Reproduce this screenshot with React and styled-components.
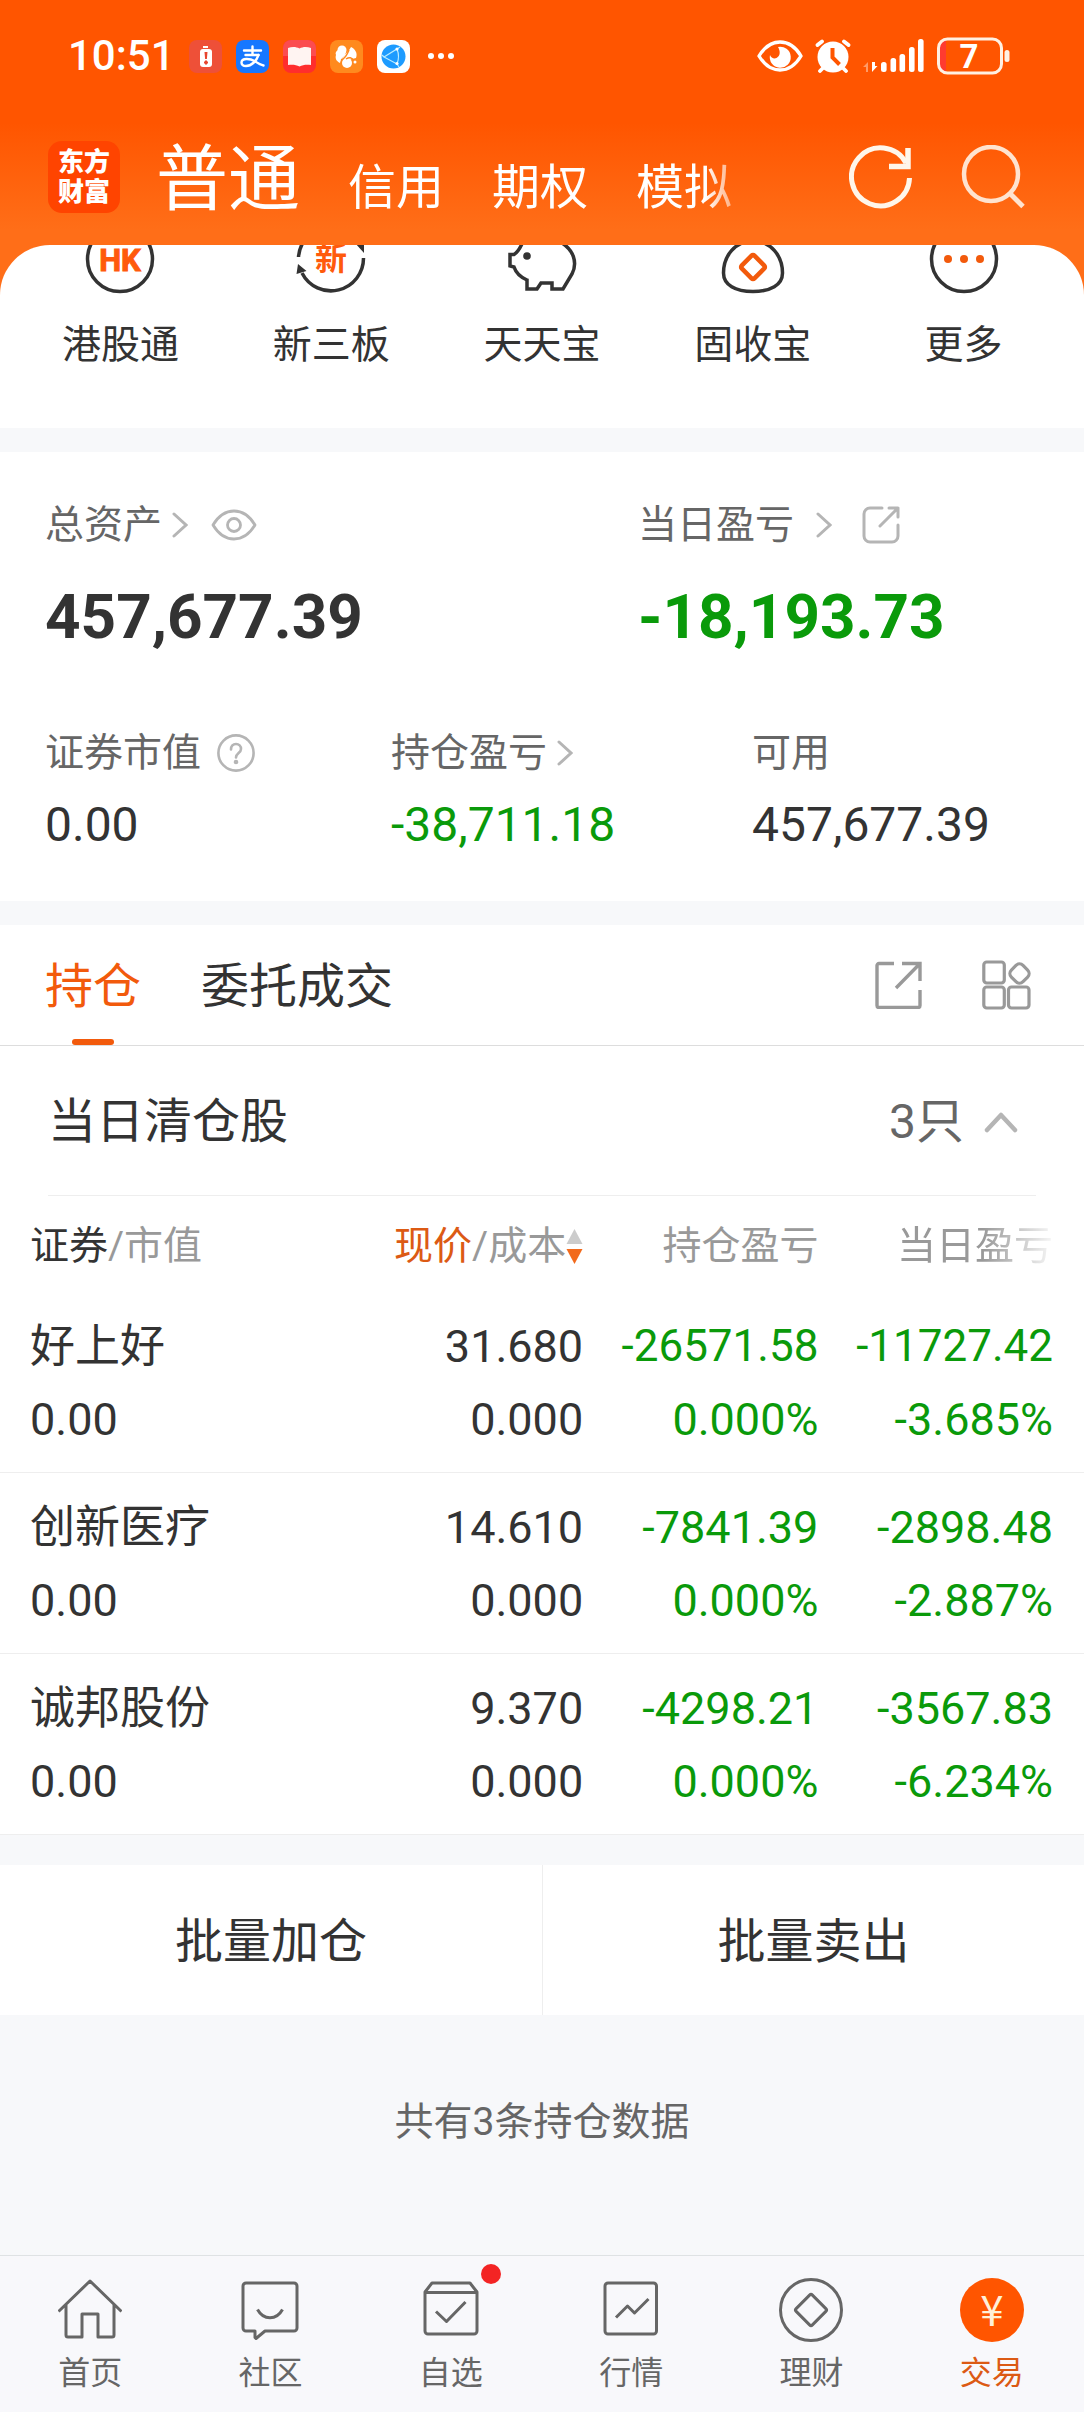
import React from 'react';

import styled, { createGlobalStyle } from 'styled-components';

const GlobalStyle = createGlobalStyle`
  :root {
    --orange: #f25a0c;
    --green: #0a9a0a;
    --ink: #333;
    --label: #666;
    --muted: #999;
    --icon: #b5b5b5;
    --band: #f7f8fa;
    --fs-sm: 32px;
    --fs-md: 39px;
    --fs-lg: 45px;
    --fs-xl: 48px;
  }

  * {
    box-sizing: border-box;
  }

  body {
    margin: 0;
    background: var(--band);
    color: var(--ink);
    font-family: Roboto, 'Noto Sans CJK SC', sans-serif;
    font-size: var(--fs-md);
    line-height: 56px;
  }

  svg {
    display: block;
    flex: none;
  }
`;

const Page = styled.div`
  display: flex;
  flex-direction: column;
  min-height: 100vh;
`;

const PlainButton = styled.button`
  display: flex;
  align-items: center;
  justify-content: center;
  margin: 0;
  padding: 0;
  border: 0;
  background: none;
  color: inherit;
  font: inherit;
  cursor: pointer;
`;

/* header */

const Header = styled.header`
  background: linear-gradient(#ff5500 50%, #ff6e18 94%);
  color: #fff;
`;

const StatusBar = styled.div`
  display: flex;
  align-items: center;
  justify-content: space-between;
  height: 112px;
  padding: 0 74px 0 68px;
`;

const StatusGroup = styled.div`
  display: flex;
  align-items: center;
  gap: ${({ $gap }) => $gap}px;
`;

const Clock = styled.span`
  font-size: 42px;
  font-weight: 500;
`;

const TopBar = styled.div`
  display: flex;
  align-items: center;
  height: 133px;
  padding: 0 59px 4px 48px;
`;

const Logo = styled.a`
  flex: none;
  width: 72px;
  height: 72px;
  padding: 6px 10px;
  border-radius: 14px;
  background: #ff4400;
  color: #fff;
  font-size: 26px;
  font-weight: 900;
  line-height: 30px;
  text-decoration: none;
`;

const AccountTabs = styled.nav`
  display: flex;
  flex: 1;
  align-items: baseline;
  gap: 48px;
  margin: 0 92px 0 36px;
  padding-top: 14px;
  mask-image: linear-gradient(to right, #000 calc(100% - 52px), transparent);
`;

const AccountTab = styled(PlainButton)`
  flex: none;
  font-size: ${({ $active }) => ($active ? '72px' : 'var(--fs-xl)')};
  line-height: 84px;
`;

const TopActions = styled.div`
  display: flex;
  gap: 48px;
`;

/* services */

const SheetBack = styled.div`
  background: #ff6e18;
`;

const Services = styled.section`
  display: grid;
  grid-template-columns: repeat(5, 1fr);
  padding: 0 15px 55px;
  border-radius: 50px 50px 0 0;
  background: #fff;
`;

const Service = styled.a`
  display: flex;
  flex-direction: column;
  align-items: center;
  gap: 22px;
  color: inherit;
  text-decoration: none;
`;

/* assets */

const Assets = styled.section`
  display: flex;
  flex-direction: column;
  gap: 70px;
  margin: 24px 0;
  padding: 45px 45px 48px;
  background: #fff;
`;

const AssetRow = styled.div`
  display: grid;
  grid-template-columns: ${({ $columns }) => $columns};
`;

const Asset = styled.div`
  display: flex;
  flex-direction: column;
  gap: ${({ $large }) => ($large ? 26 : 16)}px;
`;

const AssetLabel = styled.div`
  display: flex;
  align-items: center;
  gap: ${({ $gap }) => $gap || 0}px;
  color: var(--label);
`;

const IconButton = styled(PlainButton)`
  margin-left: ${({ $space }) => $space || 0}px;
`;

const Amount = styled.span`
  color: ${({ $down }) => ($down ? 'var(--green)' : 'var(--ink)')};
  font-size: ${({ $large }) => ($large ? '62px' : 'var(--fs-xl)')};
  font-weight: ${({ $large }) => ($large ? 700 : 400)};
  line-height: ${({ $large }) => ($large ? 76 : 56)}px;
`;

/* holdings */

const Holdings = styled.section`
  background: #fff;
`;

const TabBar = styled.div`
  display: flex;
  justify-content: space-between;
  height: 121px;
  padding: 0 52px 0 45px;
  border-bottom: 1px solid #ddd;
`;

const TabGroup = styled.div`
  display: flex;
  gap: 60px;
`;

const Tab = styled(PlainButton)`
  position: relative;
  padding-top: 3px;
  color: ${({ $active }) => ($active ? 'var(--orange)' : 'var(--ink)')};
  font-size: var(--fs-xl);

  &::after {
    content: '';
    display: ${({ $active }) => ($active ? 'block' : 'none')};
    position: absolute;
    bottom: 0;
    left: calc(50% - 21px);
    width: 42px;
    height: 6px;
    border-radius: 3px;
    background: var(--orange);
  }
`;

const ClearedRow = styled.div`
  display: flex;
  align-items: center;
  justify-content: space-between;
  height: 150px;
  margin: 0 48px;
  padding: 3px 18px 0 0;
  border-bottom: 1px solid #eee;
  font-size: var(--fs-xl);
`;

const Count = styled(PlainButton)`
  gap: 20px;
  color: var(--label);
`;

const Table = styled.table`
  width: 100%;
  border-spacing: 0;
  table-layout: fixed;
`;

const Column = styled.col`
  width: ${({ $width }) => $width};
`;

const HeadCell = styled.th`
  height: 96px;
  padding: 3px 0 0;
  color: var(--muted);
  font-weight: 400;
  text-align: right;
  white-space: nowrap;

  &:first-child {
    padding-left: 30px;
    text-align: left;
  }

  &:last-child {
    padding-right: 31px;
  }
`;

const HeadSort = styled(PlainButton)`
  display: inline-flex;
  vertical-align: top;
`;

const HeadName = styled.span`
  color: ${({ $active }) => ($active ? '#dc5a14' : 'var(--ink)')};
`;

const Faded = styled.span`
  mask-image: linear-gradient(to right, #000 55%, rgba(0, 0, 0, 0.08));
`;

const Cell = styled.td`
  padding: 18px 0 16px;
  border-bottom: 1px solid #eee;
  color: ${({ $down }) => ($down ? 'var(--green)' : 'var(--ink)')};
  text-align: right;
  white-space: nowrap;

  &:first-child {
    padding-left: 30px;
    text-align: left;
  }

  &:last-child {
    padding-right: 31px;
  }
`;

const Line = styled.div`
  font-size: ${({ $long }) => ($long ? '44px' : 'var(--fs-lg)')};
  line-height: 73px;
`;

const BatchActions = styled.div`
  display: grid;
  grid-template-columns: 1fr 1fr;
  margin-top: 30px;
  background: #fff;
`;

const BatchButton = styled(PlainButton)`
  height: 150px;
  padding-top: 3px;
  font-size: var(--fs-xl);

  & + & {
    border-left: 1px solid #eee;
  }
`;

const Summary = styled.p`
  flex: 1;
  margin: 0;
  padding: 79px 0 104px;
  color: var(--label);
  text-align: center;
`;

/* bottom navigation */

const BottomNav = styled.nav`
  display: grid;
  grid-template-columns: repeat(6, 1fr);
  height: 157px;
  padding: 22px 2px 0 0;
  border-top: 1px solid #dfe2e4;
  background: #f8f8fb;
`;

const NavItem = styled.a`
  position: relative;
  display: flex;
  flex-direction: column;
  align-items: center;
  gap: 11px;
  color: ${({ $active }) => ($active ? '#dc5a14' : 'var(--label)')};
  font-size: var(--fs-sm);
  line-height: 40px;
  text-decoration: none;
`;

const Badge = styled.span`
  position: absolute;
  top: -14px;
  left: calc(50% + 30px);
  width: 20px;
  height: 20px;
  border-radius: 50%;
  background: #f32424;
`;

const YuanCoin = styled.span`
  width: 64px;
  height: 64px;
  border-radius: 50%;
  background: #ff5500;
  color: #fff0d8;
  font-family: 'Noto Sans CJK SC', sans-serif;
  font-size: 42px;
  line-height: 60px;
  text-align: center;
`;

/* icons */

const Chevron = () => (
  <svg width="16" height="26" viewBox="0 0 16 26" fill="none" stroke="#b5b5b5" strokeWidth="3" strokeLinecap="round">
    <path d="M2 2l12 11L2 24" />
  </svg>
);

const ChevronUp = () => (
  <svg width="34" height="22" viewBox="0 0 34 22" fill="none" stroke="#b5b5b5" strokeWidth="4.500" strokeLinecap="round" strokeLinejoin="round">
    <path d="M3 19L17 4l14 15" />
  </svg>
);

const EyeIcon = () => (
  <svg width="46" height="32" viewBox="0 0 46 32" fill="none" stroke="#b5b5b5" strokeWidth="2.800">
    <path d="M2 16C8 6 15 2 23 2s15 4 21 14c-6 10-13 14-21 14S8 26 2 16z" strokeLinejoin="round" />
    <circle cx="23" cy="16" r="6.5" />
  </svg>
);

const HelpIcon = () => (
  <svg width="38" height="38" viewBox="0 0 38 38" fill="none" stroke="#b5b5b5" strokeWidth="2.600" strokeLinecap="round">
    <circle cx="19" cy="19" r="17.6" />
    <path d="M14 15.5c0-3.500 2-5.500 5-5.500s5 2 5 5c0 4-5 4-5 8.500" />
    <circle cx="19" cy="28" r="1" fill="#b5b5b5" />
  </svg>
);

const ShareIcon = () => (
  <svg width="38" height="38" viewBox="0 0 38 38" fill="none" stroke="#b5b5b5" strokeWidth="3" strokeLinecap="round" strokeLinejoin="round">
    <path d="M20 2H8a6 6 0 0 0-6 6v22a6 6 0 0 0 6 6h22a6 6 0 0 0 6-6V19" />
    <path d="M27 2h9v9M36 2L18 20" />
  </svg>
);

const ShareSquareIcon = () => (
  <svg width="48" height="48" viewBox="0 0 48 48" fill="none" stroke="#999" strokeWidth="3.400">
    <path d="M20 2.500H5a2 2 0 0 0-2 2v40a2 2 0 0 0 2 2h39a2 2 0 0 0 2-2V29" />
    <path d="M28 2.500h18V20M45.500 3L22 27" />
  </svg>
);

const GridIcon = () => (
  <svg width="50" height="50" viewBox="0 0 50 50" fill="none" stroke="#999" strokeWidth="3.200">
    <rect x="1.800" y="2" width="20.500" height="21" rx="3" />
    <rect x="1.800" y="27" width="20.500" height="21" rx="3" />
    <rect x="26.500" y="27" width="20.500" height="21" rx="3" />
    <rect x="29.300" y="5.300" width="16.500" height="16.500" rx="5" transform="rotate(45 37.500 13.500)" />
  </svg>
);

const SortIcon = () => (
  <svg width="17" height="38" viewBox="0 0 17 38">
    <path d="M8.500 2l8 15H.5z" fill="#ccc" />
    <path d="M8.500 37l8-15H.5z" fill="#f26a1c" />
  </svg>
);

const RefreshIcon = () => (
  <svg width="64" height="64" viewBox="0 0 64 64" fill="none" stroke="#fff6ea" strokeWidth="5">
    <path d="M60.500 33A29 29 0 1 1 57 18" />
    <path d="M59 3v18.500H40" strokeWidth="5.500" />
  </svg>
);

const SearchIcon = () => (
  <svg width="64" height="64" viewBox="0 0 64 64" fill="none" stroke="#ffe3cf" strokeWidth="4.500">
    <circle cx="30" cy="29" r="27" />
    <path d="M48.500 48L62 61.500" strokeWidth="5" />
  </svg>
);

const NoticeIcons = () => (
  <>
    <svg width="33" height="33" viewBox="0 0 33 33">
      <rect width="33" height="33" rx="8" fill="#ee5038" />
      <path d="M14 6h5v2h-5z" fill="#fff" />
      <rect x="11" y="9" width="12" height="18" rx="3" fill="#fff" />
      <path d="M15.500 12h3l-.6 7h-1.800zM16 20.500h2v1h1v2h-1v1h-2v-1h-1v-2h1z" fill="#e8452e" />
    </svg>
    <svg width="33" height="33" viewBox="0 0 33 33">
      <rect width="33" height="33" rx="8" fill="#1677ff" />
      <g fill="none" stroke="#fff" strokeWidth="2.400" strokeLinecap="round">
        <path d="M8 10.500h17M16.500 6.500V15M9.500 15h13" />
        <path d="M22.500 15c-2 6-7 11-12.500 11-3 0-4.500-1.500-4.500-3.500 0-5 9-4 13-1.500 3 2 6 4 9 4.500" />
      </g>
    </svg>
    <svg width="33" height="33" viewBox="0 0 33 33">
      <rect width="33" height="33" rx="8" fill="#ff2d2d" />
      <path d="M0 8a8 8 0 0 1 8-8h17a8 8 0 0 1 8 8v8H0z" fill="#fb4c50" />
      <path d="M5 8c4-1.500 8-1.500 11.500.5C20 6.500 24 6.500 28 8v17c-4-.5-8-.5-11.500 1.500C13 24.500 9 24.500 5 25z" fill="#fff4f2" />
    </svg>
    <svg width="33" height="33" viewBox="0 0 33 33">
      <rect width="33" height="33" rx="8" fill="#ff8a1e" />
      <circle cx="12" cy="10" r="4.500" fill="#fff" />
      <path d="M16 11c0 5-5 6-6 12-4-2-5-5-4-8-1-2 0-4 2-5z" fill="#fff" />
      <path d="M12 19c2-5 6-6 9-12 4 2 7 6 5 11l-4 1-8 3z" fill="#fff" />
      <circle cx="17" cy="23" r="5" fill="#fff" />
      <path d="M11 20c4-1 6-5 8-10M16 19c3-2 6-2 8 2" stroke="#ff8a1e" strokeWidth="1.500" fill="none" />
      <circle cx="25" cy="22" r="1.500" fill="#fff" />
    </svg>
    <svg width="33" height="33" viewBox="0 0 33 33">
      <rect width="33" height="33" rx="8" fill="#fff" />
      <circle cx="16.500" cy="16.500" r="12" fill="#1d9bff" />
      <g fill="none" stroke="#b9ecff" strokeWidth="1.200">
        <path d="M7 17L20 9c2 5 2 10 0 15zM5 15l2 2M20 9l3-2M20 24l2 3" />
      </g>
      <circle cx="20" cy="9" r="1.600" fill="#fff" />
      <circle cx="20" cy="23.500" r="1.600" fill="#fff" />
    </svg>
    <svg width="32" height="8" viewBox="0 0 32 8" fill="#fff">
      <circle cx="7" cy="4" r="3" />
      <circle cx="17" cy="4" r="3" />
      <circle cx="27" cy="4" r="3" />
    </svg>
  </>
);

const DeviceIcons = () => (
  <>
    <svg width="46" height="32" viewBox="0 0 46 32">
      <path d="M2 16C8 6 15 2 23 2s15 4 21 14c-6 10-13 14-21 14S8 26 2 16z" fill="none" stroke="#fff" strokeWidth="3.400" strokeLinejoin="round" />
      <path d="M21 7a10.500 10.500 0 1 1-8 8c1 3 4 4 6.500 3 4-2 4-7 1.500-11z" fill="#fff" />
    </svg>
    <svg width="36" height="34" viewBox="0 0 36 34">
      <g stroke="#fff" strokeWidth="3.800" strokeLinecap="round">
        <path d="M2.500 6L7 2.500M33.500 6L29 2.500M5 32l4-4M31 32l-4-4" />
      </g>
      <circle cx="18" cy="18" r="15.500" fill="#fff" />
      <path d="M17.500 9v9.500l7 7" fill="none" stroke="#ff5500" strokeWidth="4" />
    </svg>
    <svg width="62" height="36" viewBox="0 0 62 36" fill="#fff">
      <path d="M5 24v10H3v-5H0z" fill="#ff9a66" />
      <path d="M9 24v10l5.500-6H12v-4z" />
      <rect x="18" y="24" width="5.600" height="10" rx="2.500" />
      <rect x="27.500" y="20" width="5.600" height="14" rx="2.500" />
      <rect x="36.500" y="16" width="5.600" height="18" rx="2.500" />
      <rect x="46" y="9" width="5.600" height="25" rx="2.500" />
      <rect x="55" y="1" width="5.600" height="33" rx="2.500" />
    </svg>
    <svg width="73" height="38" viewBox="0 0 73 38">
      <path d="M9 3v32c-4 0-7-3-7-7V10c0-4 3-7 7-7z" fill="#ff3b30" />
      <rect x="1.500" y="2" width="63" height="34" rx="9" fill="none" stroke="#fff0e2" strokeWidth="3" />
      <rect x="67.500" y="13" width="5" height="12" rx="2.500" fill="#fff0e2" />
      <text x="32" y="31" fill="#fff" fontSize="33" fontWeight="700" textAnchor="middle">7</text>
    </svg>
  </>
);

const ServiceIcon = ({ children }) => (
  <svg width="72" height="50" viewBox="0 20 72 50" fill="none" stroke="#333" strokeWidth="3.500">
    {children}
  </svg>
);

const serviceIcons = {
  hk: (
    <>
      <circle cx="36" cy="34" r="32.500" />
      <text x="36" y="46" fill="#ff5a0c" stroke="#ff5a0c" strokeWidth="1" fontSize="31" fontWeight="700" textAnchor="middle">HK</text>
    </>
  ),
  board: (
    <>
      <path d="M3.500 32a32.500 32.500 0 0 1 7-18M7 48a32.500 32.500 0 0 0 61.500-15" />
      <path d="M1.500 49l1.500-10 8.500 7zM60 18h9v10z" fill="#333" stroke="none" />
      <text x="36" y="45" fill="#ff5a0c" stroke="none" fontSize="32" fontWeight="700" textAnchor="middle">新</text>
    </>
  ),
  piggy: (
    <>
      <path d="M18 14C15 22 12 27 8 29.500H4V41l4 1c2 6 6 10 13 13v9h10l4-6h11v6h11l9-15c6-12 1-24-10-31" />
      <circle cx="21" cy="31" r="3.800" fill="#333" stroke="none" />
    </>
  ),
  bond: (
    <>
      <path d="M36 16C18 16 6.500 31 6.500 48c0 12 12 18.500 29.500 18.500S65.500 60 65.500 48C65.500 31 54 16 36 16z" />
      <rect x="27" y="33" width="18" height="18" rx="2" transform="rotate(45 36 42)" stroke="#f25a0c" strokeWidth="4.500" />
    </>
  ),
  more: (
    <>
      <circle cx="36" cy="34" r="32.500" />
      <g fill="#f25a0c" stroke="none">
        <circle cx="20" cy="34" r="4" />
        <circle cx="36" cy="34" r="4" />
        <circle cx="52" cy="34" r="4" />
      </g>
    </>
  ),
};

const NavIcon = ({ children }) => (
  <svg width="64" height="64" viewBox="0 0 64 64" fill="none" stroke="#666" strokeWidth="3" strokeLinejoin="round">
    {children}
  </svg>
);

const navIcons = {
  home: <path d="M.5 33.500L32 3l31.500 30.500M8 27v30a2 2 0 0 0 2 2h14V36h16v23h14a2 2 0 0 0 2-2V27" />,
  community: (
    <>
      <path d="M17 53H8a3 3 0 0 1-3-3V8a3 3 0 0 1 3-3h48a3 3 0 0 1 3 3v42a3 3 0 0 1-3 3H27l-9 7.500-1-1z" />
      <path d="M19.500 31.500c6 11 19 11 25 0" />
    </>
  ),
  watchlist: (
    <>
      <path d="M6 14v39a3 3 0 0 0 3 3h46a3 3 0 0 0 3-3V14l-7-9H13zM6 14.500h52" />
      <path d="M17 33.500l10.500 10L46.500 24" />
    </>
  ),
  market: (
    <>
      <rect x="6" y="5" width="51.500" height="51" rx="3" />
      <path d="M17 39.500L28.500 28l7 7L49.500 21" />
    </>
  ),
  wealth: (
    <>
      <circle cx="32" cy="32" r="30.500" />
      <rect x="20.500" y="20.500" width="23" height="23" rx="2" transform="rotate(45 32 32)" />
    </>
  ),
};

/* data */

const services = [
  { icon: 'hk', name: '港股通' },
  { icon: 'board', name: '新三板' },
  { icon: 'piggy', name: '天天宝' },
  { icon: 'bond', name: '固收宝' },
  { icon: 'more', name: '更多' },
];

const holdings = [
  { name: '好上好', value: '0.00', price: '31.680', cost: '0.000', total: '-26571.58', totalRate: '0.000%', day: '-11727.42', dayRate: '-3.685%' },
  { name: '创新医疗', value: '0.00', price: '14.610', cost: '0.000', total: '-7841.39', totalRate: '0.000%', day: '-2898.48', dayRate: '-2.887%' },
  { name: '诚邦股份', value: '0.00', price: '9.370', cost: '0.000', total: '-4298.21', totalRate: '0.000%', day: '-3567.83', dayRate: '-6.234%' },
];

const navItems = [
  { icon: 'home', name: '首页' },
  { icon: 'community', name: '社区' },
  { icon: 'watchlist', name: '自选', badge: true },
  { icon: 'market', name: '行情' },
  { icon: 'wealth', name: '理财' },
  { name: '交易', active: true },
];

const TwoLineCell = ({ top, bottom, down }) => (
  <Cell $down={down}>
    <Line $long={top.length > 8}>{top}</Line>
    <Line>{bottom}</Line>
  </Cell>
);

const App = () => (
  <Page>
    <GlobalStyle />
    <Header>
      <StatusBar>
        <StatusGroup $gap={14}>
          <Clock>10:51</Clock>
          <NoticeIcons />
        </StatusGroup>
        <StatusGroup $gap={12}>
          <DeviceIcons />
        </StatusGroup>
      </StatusBar>
      <TopBar>
        <Logo href="#">东方财富</Logo>
        <AccountTabs>
          <AccountTab $active>普通</AccountTab>
          <AccountTab>信用</AccountTab>
          <AccountTab>期权</AccountTab>
          <AccountTab>模拟</AccountTab>
        </AccountTabs>
        <TopActions>
          <IconButton aria-label="刷新"><RefreshIcon /></IconButton>
          <IconButton aria-label="搜索"><SearchIcon /></IconButton>
        </TopActions>
      </TopBar>
    </Header>

    <SheetBack>
      <Services>
        {services.map(({ icon, name }) => (
          <Service href="#" key={icon}>
            <ServiceIcon>{serviceIcons[icon]}</ServiceIcon>
            {name}
          </Service>
        ))}
      </Services>
    </SheetBack>

    <Assets>
      <AssetRow $columns="593fr 401fr">
        <Asset $large>
          <AssetLabel $gap={10}>
            总资产
            <Chevron />
            <IconButton $space={13} aria-label="隐藏金额"><EyeIcon /></IconButton>
          </AssetLabel>
          <Amount $large>457,677.39</Amount>
        </Asset>
        <Asset $large>
          <AssetLabel $gap={22}>
            当日盈亏
            <Chevron />
            <IconButton $space={8} aria-label="分享"><ShareIcon /></IconButton>
          </AssetLabel>
          <Amount $large $down>-18,193.73</Amount>
        </Asset>
      </AssetRow>
      <AssetRow $columns="346fr 361fr 287fr">
        <Asset>
          <AssetLabel $gap={16}>
            证券市值
            <IconButton aria-label="说明"><HelpIcon /></IconButton>
          </AssetLabel>
          <Amount>0.00</Amount>
        </Asset>
        <Asset>
          <AssetLabel $gap={10}>
            持仓盈亏
            <Chevron />
          </AssetLabel>
          <Amount $down>-38,711.18</Amount>
        </Asset>
        <Asset>
          <AssetLabel>可用</AssetLabel>
          <Amount>457,677.39</Amount>
        </Asset>
      </AssetRow>
    </Assets>

    <Holdings>
      <TabBar>
        <TabGroup>
          <Tab $active>持仓</Tab>
          <Tab>委托成交</Tab>
        </TabGroup>
        <TabGroup>
          <IconButton aria-label="分享持仓"><ShareSquareIcon /></IconButton>
          <IconButton aria-label="更多功能"><GridIcon /></IconButton>
        </TabGroup>
      </TabBar>
      <ClearedRow>
        当日清仓股
        <Count>
          3只
          <ChevronUp />
        </Count>
      </ClearedRow>
      <Table>
        <colgroup>
          <Column $width="32%" />
          <Column $width="21.8%" />
          <Column $width="21.7%" />
          <Column />
        </colgroup>
        <thead>
          <tr>
            <HeadCell><HeadName>证券</HeadName>/市值</HeadCell>
            <HeadCell>
              <HeadSort><HeadName $active>现价</HeadName>/成本<SortIcon /></HeadSort>
            </HeadCell>
            <HeadCell>持仓盈亏</HeadCell>
            <HeadCell><Faded>当日盈亏</Faded></HeadCell>
          </tr>
        </thead>
        <tbody>
          {holdings.map((row) => (
            <tr key={row.name}>
              <TwoLineCell top={row.name} bottom={row.value} />
              <TwoLineCell top={row.price} bottom={row.cost} />
              <TwoLineCell top={row.total} bottom={row.totalRate} down />
              <TwoLineCell top={row.day} bottom={row.dayRate} down />
            </tr>
          ))}
        </tbody>
      </Table>
    </Holdings>

    <BatchActions>
      <BatchButton>批量加仓</BatchButton>
      <BatchButton>批量卖出</BatchButton>
    </BatchActions>
    <Summary>共有3条持仓数据</Summary>

    <BottomNav>
      {navItems.map(({ icon, name, badge, active }) => (
        <NavItem href="#" key={name} $active={active}>
          {icon ? <NavIcon>{navIcons[icon]}</NavIcon> : <YuanCoin>¥</YuanCoin>}
          {name}
          {badge && <Badge />}
        </NavItem>
      ))}
    </BottomNav>
  </Page>
);

export default App;
